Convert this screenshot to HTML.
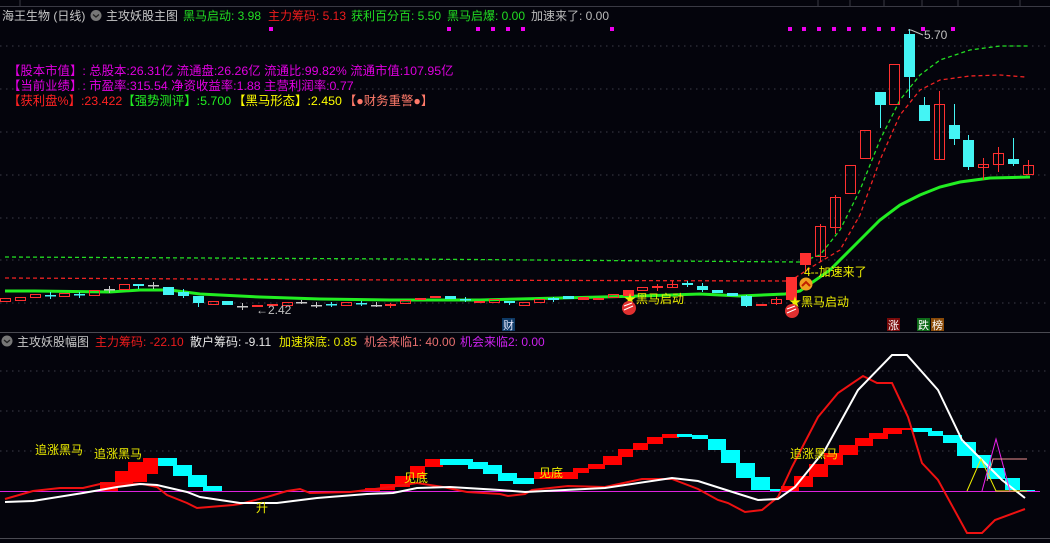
<!DOCTYPE html>
<html><head><meta charset="utf-8"><style>
html,body{margin:0;padding:0;background:#04040c;}
svg{display:block;}
text{font-family:"Liberation Sans","Noto Sans CJK SC",sans-serif;}
</style></head><body>
<svg id="s" width="1050" height="543" viewBox="0 0 1050 543" xmlns="http://www.w3.org/2000/svg">
<rect width="1050" height="543" fill="#04040c"/>
<line x1="0" y1="6.5" x2="1050" y2="6.5" stroke="#3a3a44"/>
<g stroke="#3a3a44"><line x1="20" y1="0" x2="20" y2="6"/><line x1="818" y1="0" x2="818" y2="6"/><line x1="850" y1="0" x2="850" y2="6"/><line x1="884" y1="0" x2="884" y2="6"/><line x1="922" y1="0" x2="922" y2="6"/><line x1="958" y1="0" x2="958" y2="6"/><line x1="1020" y1="0" x2="1020" y2="6"/></g>
<g stroke="#3c3c48" stroke-dasharray="1.5 4.5" stroke-width="1">
<line x1="0" y1="46" x2="1050" y2="46"/><line x1="0" y1="89" x2="1050" y2="89"/><line x1="0" y1="132" x2="1050" y2="132"/><line x1="0" y1="175" x2="1050" y2="175"/><line x1="0" y1="218" x2="1050" y2="218"/><line x1="0" y1="260" x2="1050" y2="260"/><line x1="0" y1="303" x2="1050" y2="303"/>
<line x1="0" y1="371" x2="1050" y2="371"/><line x1="0" y1="411" x2="1050" y2="411"/><line x1="0" y1="451" x2="1050" y2="451"/>
</g>
<line x1="0" y1="332.5" x2="1050" y2="332.5" stroke="#4a4a52"/>
<line x1="0" y1="538.5" x2="1050" y2="538.5" stroke="#4a4a52"/>
<g font-size="12">
<text x="2" y="20" fill="#c8c8c8">海王生物 (日线)</text>
<text x="106" y="20" fill="#c8c8c8">主攻妖股主图</text>
<text x="183" y="20" fill="#22dd22">黑马启动: 3.98</text>
<text x="268" y="20" fill="#ee1c1c">主力筹码: 5.13</text>
<text x="351" y="20" fill="#22dd22">获利百分百: 5.50</text>
<text x="447" y="20" fill="#22dd22">黑马启爆: 0.00</text>
<text x="531" y="20" fill="#bbbbbb">加速来了: 0.00</text>
</g>
<circle cx="96" cy="15.5" r="5.5" fill="#777"/><path d="M93 14.5l3 2.5 3-2.5" stroke="#222" stroke-width="1.3" fill="none"/>
<g fill="#ee00ee" id="dots"></g>
<g font-size="12.4">
<text x="8" y="75" fill="#e000e0">【股本市值】: 总股本:26.31亿 流通盘:26.26亿 流通比:99.82% 流通市值:107.95亿</text>
<text x="8" y="90" fill="#e000e0">【当前业绩】: 市盈率:315.54 净资收益率:1.88 主营利润率:0.77</text>
<text x="8" y="105" fill="#ff2222">【获利盘%】:23.422<tspan fill="#22ee22">【强势测评】:5.700</tspan><tspan fill="#ffff00" dx="2">【黑马形态】:2.450</tspan><tspan fill="#ff7a6a" dx="2">【●财务重警●】</tspan></text>
</g>
<polyline fill="none" stroke="#22dd22" stroke-width="1.3" stroke-dasharray="4 3" points="5,257 400,259 800,262 820,255 840,230 860,190 880,140 900,100 920,75 940,60 970,50 1000,46 1030,46"/>
<polyline fill="none" stroke="#ee2222" stroke-width="1.3" stroke-dasharray="4 3" points="5,278 400,280 790,281 815,265 840,250 860,215 880,160 900,115 920,90 940,80 970,76 1000,75 1025,77"/>
<polyline fill="none" stroke="#22ee22" stroke-width="3" points="5,291 35,291 110,292 140,290 170,290 200,294 240,296 260,297 320,299 390,300 420,300 480,300 560,298 640,296 700,294 740,296 785,294 800,291 830,270 860,240 880,220 900,205 920,195 940,187 960,182 990,178 1030,177"/>
<g id="cand"></g>
<text x="924" y="39" font-size="12" fill="#c0c0c0">5.70</text>
<path d="M908 30l3 0 M911 30l12 5" stroke="#c0c0c0" fill="none"/>
<text x="256" y="314" font-size="12" fill="#c0c0c0">←2.42</text>
<rect x="502" y="318" width="13" height="13" fill="#0e3a66"/><text x="503" y="329" font-size="11" fill="#e8e8ff">财</text>
<rect x="887" y="318" width="13" height="13" fill="#7a0a0a"/><text x="888" y="329" font-size="11" fill="#fff">涨</text>
<rect x="917" y="318" width="13" height="13" fill="#0e6a18"/><text x="918" y="329" font-size="11" fill="#fff">跌</text>
<rect x="931" y="318" width="13" height="13" fill="#8a4a08"/><text x="932" y="329" font-size="11" fill="#fff">榜</text>
<text x="624" y="303" font-size="12" fill="#eeee00">★黑马启动</text>
<text x="789" y="306" font-size="12" fill="#eeee00">★黑马启动</text>
<text x="804" y="276" font-size="12" fill="#eeee00">4--加速来了</text>
<circle cx="629" cy="308" r="7" fill="#e03030"/><path d="M624 306l8 -3M624 310l9 -4" stroke="#fff" stroke-width="1.2"/>
<circle cx="792" cy="311" r="7" fill="#e03030"/><path d="M787 309l8 -3M787 313l9 -4" stroke="#fff" stroke-width="1.2"/>
<circle cx="806" cy="284" r="6.5" fill="#f0a020"/><path d="M802 286l4-4 4 4" stroke="#c02000" stroke-width="2" fill="none"/>
<circle cx="7" cy="341" r="5.5" fill="#777"/><path d="M4 340l3 2.5 3-2.5" stroke="#222" stroke-width="1.3" fill="none"/>
<g font-size="12">
<text x="17" y="346" fill="#c8c8c8">主攻妖股幅图</text>
<text x="95" y="346" fill="#ee1c1c">主力筹码: -22.10</text>
<text x="190" y="346" fill="#e8e8e8">散户筹码: -9.11</text>
<text x="279" y="346" fill="#e8e800">加速探底: 0.85</text>
<text x="364" y="346" fill="#e87070">机会来临1: 40.00</text>
<text x="460" y="346" fill="#cc22ee">机会来临2: 0.00</text>
</g>
<g id="bars"></g>
<line x1="0" y1="491.5" x2="1040" y2="491.5" stroke="#dd22dd" stroke-width="1"/>
<polyline fill="none" stroke="#ee1111" stroke-width="2" points="5,499 33,491 60,488 83,488 100,484 123,483 143,484 157,487 167,495 187,503 197,508 233,505 240,504 267,497 287,491 300,489 310,493 350,492 383,488 417,483 443,487 467,492 500,494 508,496 525,494 532,490 568,486 605,487 642,479 672,479 698,489 718,500 728,503 745,512 762,510 778,497 792,467 818,417 838,393 863,376 877,383 892,383 908,417 922,463 938,480 967,533 982,533 995,520 1025,509"/>
<polyline fill="none" stroke="#ffffff" stroke-width="2" points="5,502 33,501 83,493 117,487 140,484 157,485 187,492 200,497 240,503 277,503 317,498 367,494 393,493 417,488 450,487 500,490 525,492 605,488 672,478 698,481 742,495 758,500 778,499 795,487 825,450 858,390 892,355 907,355 938,390 962,440 1002,480 1025,498"/>
<polyline fill="none" stroke="#eeee00" stroke-width="1" points="967,491 981,459 996,491 1027,491"/>
<polyline fill="none" stroke="#ee22ee" stroke-width="1" points="982,491 996,439 1010,491"/>
<polyline fill="none" stroke="#ee9090" stroke-width="1" points="987,481 993,459 1027,459"/>
<g font-size="12" fill="#eeee00">
<text x="35" y="454">追涨黑马</text><text x="94" y="458">追涨黑马</text><text x="256" y="512">升</text>
<text x="404" y="482">见底</text><text x="539" y="477">见底</text><text x="790" y="458">追涨黑马</text>
</g>
<script>
var NS="http://www.w3.org/2000/svg";
function el(p,t,a){var e=document.createElementNS(NS,t);for(var k in a)e.setAttribute(k,a[k]);document.getElementById(p).appendChild(e);}
[271,449,478,493,508,523,612,790,804,819,834,849,864,879,893,923,953].forEach(function(x){el("dots","rect",{x:x-2,y:27,width:4,height:4});});
var R="#ff3030",C="#44f4f4",G="#c8c8c8";
var c=[[0,298,301,R,0],[15,297,300,R,0],[30,294,297,R,0],[45,295,296,C,1,292,299],[59,293,296,R,0],[74,294,295,C,1,292,298],[89,290,295,R,0],[104,289,290,G,1,286,293],[119,284,289,R,0],[133,284,286,C,1,284,289],[148,285,286,G,1,282,289],[163,287,295,C,1],[178,292,296,C,1,289,298],[193,296,303,C,1,296,307],[208,301,304,R,0],[222,301,305,C,1],[237,306,307,G,1,303,310],[252,305,307,R,1],[267,304,306,R,1],[282,302,305,R,0],[296,302,303,G,1,300,304],[311,305,306,G,1,302,308],[326,304,305,C,1,302,307],[341,302,305,R,0],[356,303,304,C,1,301,306],[371,305,306,G,1,302,307],[385,304,306,R,1,303,308],
[400,300,303,R,0],[415,298,300,R,1],[430,296,298,R,1],[445,296,299,C,1],[460,299,300,C,1,297,302],[474,301,303,R,1],[489,299,302,R,0],[504,301,303,C,1,301,305],[519,302,305,R,0],[534,299,302,R,0],[548,298,300,C,1,297,302],[563,296,299,C,1],[578,297,300,R,1],[593,298,300,R,1],[608,294,297,R,0],[623,290,296,R,1],[637,287,290,R,0],[652,286,288,R,1,284,291],[667,284,287,R,0,281,288],[682,283,285,C,1,281,287],[697,286,290,C,1,283,292],[712,290,293,C,1],[727,293,296,C,1],[741,296,306,C,1,295,307],[756,304,306,R,1],[771,299,303,R,0,297,305],[786,277,300,R,1],
[800,253,265,R,1,253,272],[815,226,256,R,0,224,262],[830,197,227,R,0,195,234],[845,165,193,R,0],[860,130,158,R,0],[875,92,105,C,1,92,128],[889,64,104,R,0],[904,34,77,C,1,29,98],[919,105,121,C,1,97,121],[934,104,159,R,0,91,159],[949,125,139,C,1,104,145],[963,140,167,C,1,135,170],[978,164,167,R,0,158,180],[993,153,164,R,0,147,172],[1008,159,164,C,1,138,166],[1023,165,174,R,0,160,174]];
c.forEach(function(k){var x=k[0],w=10;if(k[5]!==undefined)el("cand","line",{x1:x+w/2+.5,y1:k[5],x2:x+w/2+.5,y2:k[6],stroke:k[3]});
 if(k[4])el("cand","rect",{x:x,y:k[1],width:w+1,height:Math.max(1.5,k[2]-k[1]),fill:k[3]});
 else el("cand","rect",{x:x+.5,y:k[1]+.5,width:w,height:Math.max(1,k[2]-k[1]),fill:"none",stroke:k[3]});});
var b=[[100,118,482,491,R],[115,133,471,486,R],[128,147,462,482,R],[143,158,458,474,R],[158,177,458,466,C],[173,192,465,476,C],[188,207,475,487,C],[203,222,486,491,C],
[365,380,488,491,R],[380,395,484,490,R],[395,410,476,487,R],[410,425,466,478,R],[425,443,459,467,R],[440,473,459,465,C],[468,488,462,469,C],[483,502,465,474,C],[498,517,473,481,C],[513,534,478,484,C],
[534,578,472,479,R],[573,589,468,473,R],[588,605,464,469,R],[603,622,456,465,R],[618,633,449,457,R],[633,648,443,450,R],[647,663,437,444,R],[662,679,434,438,R],[677,692,434,437,C],[692,708,435,439,C],[708,726,439,450,C],[721,740,450,463,C],[736,755,463,478,C],[751,770,477,490,C],[770,785,489,492,C],
[781,799,486,492,R],[794,813,476,487,R],[809,828,464,477,R],[824,843,453,465,R],[839,858,445,455,R],[855,873,438,446,R],[869,888,433,439,R],[883,902,428,434,R],[902,912,428,430,R],[912,932,428,432,C],[928,943,431,436,C],[943,962,435,443,C],[957,976,442,456,C],[972,991,455,468,C],[987,1005,468,479,C],[1005,1020,478,490,C],[1020,1035,490,492,C]];
b.forEach(function(k){el("bars","rect",{x:k[0],y:k[2],width:k[1]-k[0],height:k[3]-k[2],fill:k[4]=="#44f4f4"?"#00ffff":"#ff0000"});});
</script>
</svg>
</body></html>
